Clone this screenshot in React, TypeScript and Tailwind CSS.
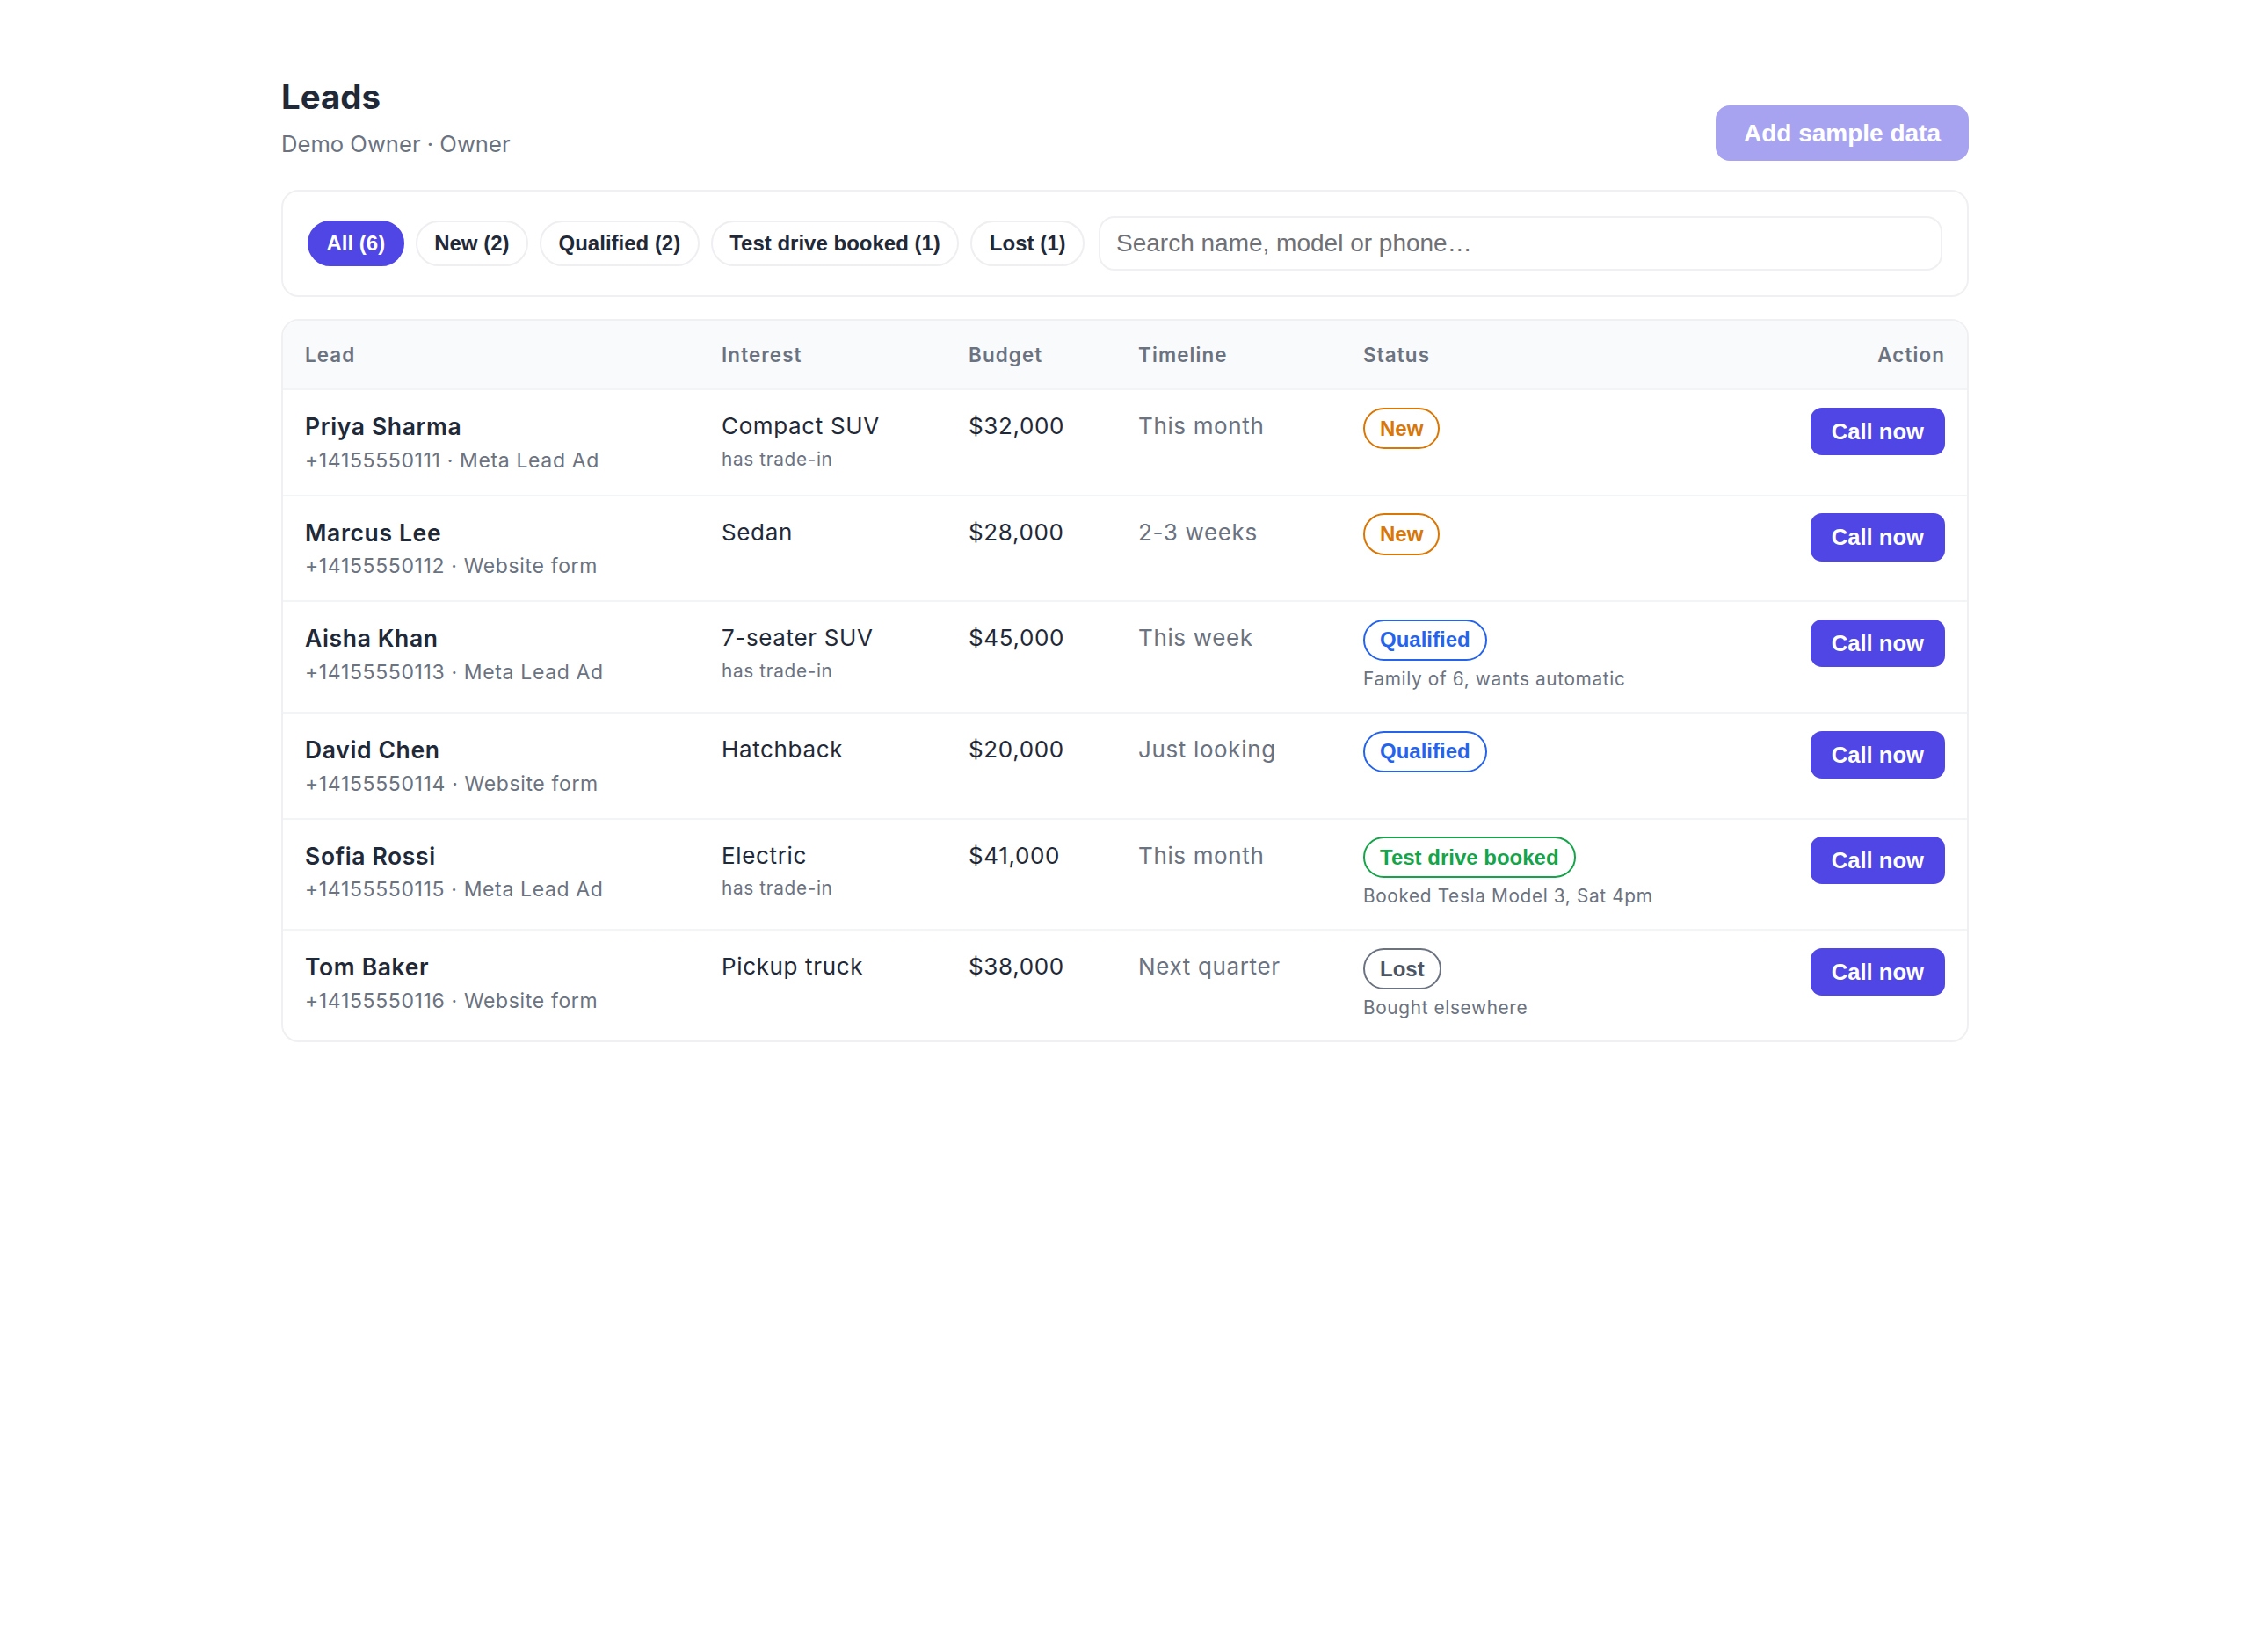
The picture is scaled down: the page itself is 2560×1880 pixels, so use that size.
import React, { useState } from 'react';

type Status = 'new' | 'qualified' | 'test' | 'lost';

interface Lead {
  name: string;
  phone: string;
  source: string;
  interest: string;
  tradeIn: boolean;
  budget: string;
  timeline: string;
  status: Status;
  note?: string;
}

const leads: Lead[] = [
  { name: 'Priya Sharma', phone: '+14155550111', source: 'Meta Lead Ad', interest: 'Compact SUV', tradeIn: true, budget: '$32,000', timeline: 'This month', status: 'new' },
  { name: 'Marcus Lee', phone: '+14155550112', source: 'Website form', interest: 'Sedan', tradeIn: false, budget: '$28,000', timeline: '2-3 weeks', status: 'new' },
  { name: 'Aisha Khan', phone: '+14155550113', source: 'Meta Lead Ad', interest: '7-seater SUV', tradeIn: true, budget: '$45,000', timeline: 'This week', status: 'qualified', note: 'Family of 6, wants automatic' },
  { name: 'David Chen', phone: '+14155550114', source: 'Website form', interest: 'Hatchback', tradeIn: false, budget: '$20,000', timeline: 'Just looking', status: 'qualified' },
  { name: 'Sofia Rossi', phone: '+14155550115', source: 'Meta Lead Ad', interest: 'Electric', tradeIn: true, budget: '$41,000', timeline: 'This month', status: 'test', note: 'Booked Tesla Model 3, Sat 4pm' },
  { name: 'Tom Baker', phone: '+14155550116', source: 'Website form', interest: 'Pickup truck', tradeIn: false, budget: '$38,000', timeline: 'Next quarter', status: 'lost', note: 'Bought elsewhere' },
];

const badges: Record<Status, { label: string; className: string }> = {
  new: { label: 'New', className: 'border-[#d97706] text-[#d97706]' },
  qualified: { label: 'Qualified', className: 'border-[#2563eb] text-[#2563eb]' },
  test: { label: 'Test drive booked', className: 'border-[#16a34a] text-[#16a34a]' },
  lost: { label: 'Lost', className: 'border-[#6b7280] text-[#4b5563]' },
};

const filters = [
  { key: 'all', label: 'All (6)' },
  { key: 'new', label: 'New (2)' },
  { key: 'qualified', label: 'Qualified (2)' },
  { key: 'test', label: 'Test drive booked (1)' },
  { key: 'lost', label: 'Lost (1)' },
];

const rowGrid = 'grid grid-cols-[474px_281px_193px_256px_1fr_auto]';

const App: React.FC = () => {
  const [active, setActive] = useState('all');

  return (
    <div className="min-h-screen bg-white font-['Inter',sans-serif] text-[#1f2937]">
      <div className="mx-auto w-[1920px] pt-[85px] pb-[80px]">
        <div className="flex items-end justify-between">
          <div>
            <h1 className="text-[38.4px] font-bold leading-[51px] text-[#1f2937]">Leads</h1>
            <p className="mt-[9px] text-[25.6px] leading-[38.4px] text-[#6b7280]">Demo Owner · Owner</p>
          </div>
          <button
            disabled
            className="h-[63px] rounded-[16px] bg-[#a8a3f1] px-[32px] font-['Liberation_Sans',Arial,sans-serif] text-[28px] font-bold text-white"
          >
            Add sample data
          </button>
        </div>

        <div className="mt-[33px] flex items-center gap-[16px] rounded-[20px] border-2 border-[#f0f0f2] p-[28px]">
          <div className="flex gap-[13px]">
            {filters.map((f) => (
              <button
                key={f.key}
                onClick={() => setActive(f.key)}
                className={
                  active === f.key
                    ? "h-[52px] rounded-full border-2 border-[#4f46e5] bg-[#4f46e5] px-[19.5px] font-['Liberation_Sans',Arial,sans-serif] text-[24px] font-bold text-white"
                    : "h-[52px] rounded-full border-2 border-[#efeff1] bg-white px-[19.5px] font-['Liberation_Sans',Arial,sans-serif] text-[24px] font-bold text-[#1f2937]"
                }
              >
                {f.label}
              </button>
            ))}
          </div>
          <input
            placeholder="Search name, model or phone…"
            className="h-[62px] flex-1 rounded-[18px] border-2 border-[#f0f0f2] px-[18px] font-['Liberation_Sans',Arial,sans-serif] text-[28px] outline-none placeholder:text-[#6f7177]"
          />
        </div>

        <div className="mt-[25px] overflow-hidden rounded-[20px] border-2 border-[#f0f0f2]">
          <div className={`${rowGrid} h-[79px] items-center border-b-2 border-[#f3f4f6] bg-[#f9fafb] text-[22.4px] font-semibold tracking-[0.05em] text-[#6b7280]`}>
            <div className="px-[25px]">Lead</div>
            <div className="px-[25px]">Interest</div>
            <div className="px-[25px]">Budget</div>
            <div className="px-[25px]">Timeline</div>
            <div className="px-[25px]">Status</div>
            <div className="px-[25px] text-right">Action</div>
          </div>

          {leads.map((lead, i) => (
            <div
              key={lead.phone}
              className={`${rowGrid} items-start tracking-[0.04em] ${i < leads.length - 1 ? 'border-b-2 border-[#f3f4f6]' : ''}`}
            >
              <div className="px-[25px] pt-[22px] pb-[25px]">
                <p className="text-[26.5px] font-semibold leading-[38.4px] text-[#1f2937]">{lead.name}</p>
                <p className="mt-[5px] text-[23px] leading-[28px] text-[#6b7280]">
                  {lead.phone} · {lead.source}
                </p>
              </div>
              <div className="px-[25px] pt-[22px]">
                <p className="text-[26px] leading-[38.4px] text-[#1f2937]">{lead.interest}</p>
                {lead.tradeIn && (
                  <p className="mt-[4px] text-[20.8px] leading-[28px] text-[#6b7280]">has trade-in</p>
                )}
              </div>
              <div className="px-[25px] pt-[22px] text-[26px] leading-[38.4px] text-[#1f2937]">{lead.budget}</div>
              <div className="px-[25px] pt-[22px] text-[26px] leading-[38.4px] text-[#6b7280]">{lead.timeline}</div>
              <div className="px-[25px] pt-[19.5px] pb-[23px]">
                <span
                  className={`inline-flex h-[47.4px] items-center rounded-full border-2 bg-white px-[17px] font-['Liberation_Sans',Arial,sans-serif] text-[24px] font-bold tracking-normal ${badges[lead.status].className}`}
                >
                  {badges[lead.status].label}
                </span>
                {lead.note && (
                  <p className="mt-[7px] text-[20.8px] leading-[28px] text-[#6b7280]">{lead.note}</p>
                )}
              </div>
              <div className="flex justify-end px-[25px] pt-[19.5px]">
                <button className="h-[54.4px] rounded-[13px] bg-[#4f46e5] px-[24px] font-['Liberation_Sans',Arial,sans-serif] text-[25.6px] font-bold tracking-normal text-white">
                  Call now
                </button>
              </div>
            </div>
          ))}
        </div>
      </div>
    </div>
  );
};

export default App;
